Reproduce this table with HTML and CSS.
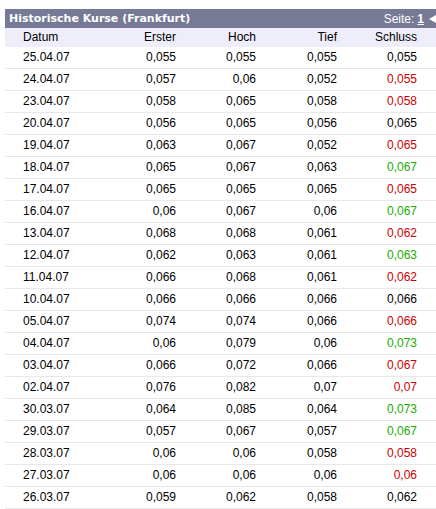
FILE: index.html
```html
<!DOCTYPE html>
<html lang="de">
<head>
<meta charset="utf-8">
<title>Historische Kurse (Frankfurt)</title>
<link rel="stylesheet" href="styles.css">
</head>
<body>
<div class="box">
  <div class="titlebar">
    <span class="title">Historische Kurse (Frankfurt)</span>
    <span class="pager">Seite: <a class="page" href="#">1</a><span class="arrow"></span></span>
  </div>
  <table class="quotes">
    <colgroup>
      <col class="c-date"><col class="c-num"><col class="c-num2"><col class="c-num3"><col class="c-num2"><col class="c-pad">
    </colgroup>
    <thead>
      <tr><th class="l">Datum</th><th>Erster</th><th>Hoch</th><th>Tief</th><th>Schluss</th><th></th></tr>
    </thead>
    <tbody>
      <tr><td class="l">25.04.07</td><td>0,055</td><td>0,055</td><td>0,055</td><td>0,055</td><td></td></tr>
      <tr><td class="l">24.04.07</td><td>0,057</td><td>0,06</td><td>0,052</td><td class="dn">0,055</td><td></td></tr>
      <tr><td class="l">23.04.07</td><td>0,058</td><td>0,065</td><td>0,058</td><td class="dn">0,058</td><td></td></tr>
      <tr><td class="l">20.04.07</td><td>0,056</td><td>0,065</td><td>0,056</td><td>0,065</td><td></td></tr>
      <tr><td class="l">19.04.07</td><td>0,063</td><td>0,067</td><td>0,052</td><td class="dn">0,065</td><td></td></tr>
      <tr><td class="l">18.04.07</td><td>0,065</td><td>0,067</td><td>0,063</td><td class="up">0,067</td><td></td></tr>
      <tr><td class="l">17.04.07</td><td>0,065</td><td>0,065</td><td>0,065</td><td class="dn">0,065</td><td></td></tr>
      <tr><td class="l">16.04.07</td><td>0,06</td><td>0,067</td><td>0,06</td><td class="up">0,067</td><td></td></tr>
      <tr><td class="l">13.04.07</td><td>0,068</td><td>0,068</td><td>0,061</td><td class="dn">0,062</td><td></td></tr>
      <tr><td class="l">12.04.07</td><td>0,062</td><td>0,063</td><td>0,061</td><td class="up">0,063</td><td></td></tr>
      <tr><td class="l">11.04.07</td><td>0,066</td><td>0,068</td><td>0,061</td><td class="dn">0,062</td><td></td></tr>
      <tr><td class="l">10.04.07</td><td>0,066</td><td>0,066</td><td>0,066</td><td>0,066</td><td></td></tr>
      <tr><td class="l">05.04.07</td><td>0,074</td><td>0,074</td><td>0,066</td><td class="dn">0,066</td><td></td></tr>
      <tr><td class="l">04.04.07</td><td>0,06</td><td>0,079</td><td>0,06</td><td class="up">0,073</td><td></td></tr>
      <tr><td class="l">03.04.07</td><td>0,066</td><td>0,072</td><td>0,066</td><td class="dn">0,067</td><td></td></tr>
      <tr><td class="l">02.04.07</td><td>0,076</td><td>0,082</td><td>0,07</td><td class="dn">0,07</td><td></td></tr>
      <tr><td class="l">30.03.07</td><td>0,064</td><td>0,085</td><td>0,064</td><td class="up">0,073</td><td></td></tr>
      <tr><td class="l">29.03.07</td><td>0,057</td><td>0,067</td><td>0,057</td><td class="up">0,067</td><td></td></tr>
      <tr><td class="l">28.03.07</td><td>0,06</td><td>0,06</td><td>0,058</td><td class="dn">0,058</td><td></td></tr>
      <tr><td class="l">27.03.07</td><td>0,06</td><td>0,06</td><td>0,06</td><td class="dn">0,06</td><td></td></tr>
      <tr><td class="l">26.03.07</td><td>0,059</td><td>0,062</td><td>0,058</td><td>0,062</td><td></td></tr>
    </tbody>
  </table>
</div>
</body>
</html>
```

FILE: styles.css
```css
html, body {
  margin: 0;
  padding: 0;
  background: #fff;
  overflow: hidden;
}
body {
  padding: 9px 0 0 5px;
  font-family: "Liberation Sans", Arial, sans-serif;
  font-size: 12px;
  color: #000;
}
.box {
  width: 431px;
}
.titlebar {
  height: 19px;
  background: #767a96;
  color: #fff;
  display: flex;
  align-items: center;
  justify-content: space-between;
  padding: 0 0 0 4px;
}
.title {
  font-family: "DejaVu Sans", Verdana, sans-serif;
  font-weight: bold;
  font-size: 11px;
}
.pager {
  display: flex;
  align-items: center;
  font-size: 12px;
}
.page {
  color: #fff;
  font-weight: bold;
  text-decoration: underline;
  margin-left: 3px;
  margin-right: 5px;
}
.arrow {
  display: block;
  width: 0;
  height: 0;
  border-top: 4.5px solid transparent;
  border-bottom: 4.5px solid transparent;
  border-right: 7px solid #fff;
  margin-top: 1px;
}
.quotes {
  width: 431px;
  border-collapse: collapse;
  table-layout: fixed;
}
.c-date { width: 96px; }
.c-num { width: 75px; }
.c-num2 { width: 80px; }
.c-num3 { width: 81px; }
.c-pad { width: 19px; }
.quotes th {
  height: 19px;
  padding: 0;
  background: #eeeefa;
  font-weight: normal;
  text-align: right;
  line-height: 19px;
}
.quotes td {
  height: 21px;
  padding: 0;
  text-align: right;
  line-height: 21px;
  border-bottom: 1px solid #e8e8e8;
}
.quotes .l {
  text-align: left;
  padding-left: 18px;
}
.quotes .dn { color: #cc0000; }
.quotes .up { color: #22aa00; }
```
